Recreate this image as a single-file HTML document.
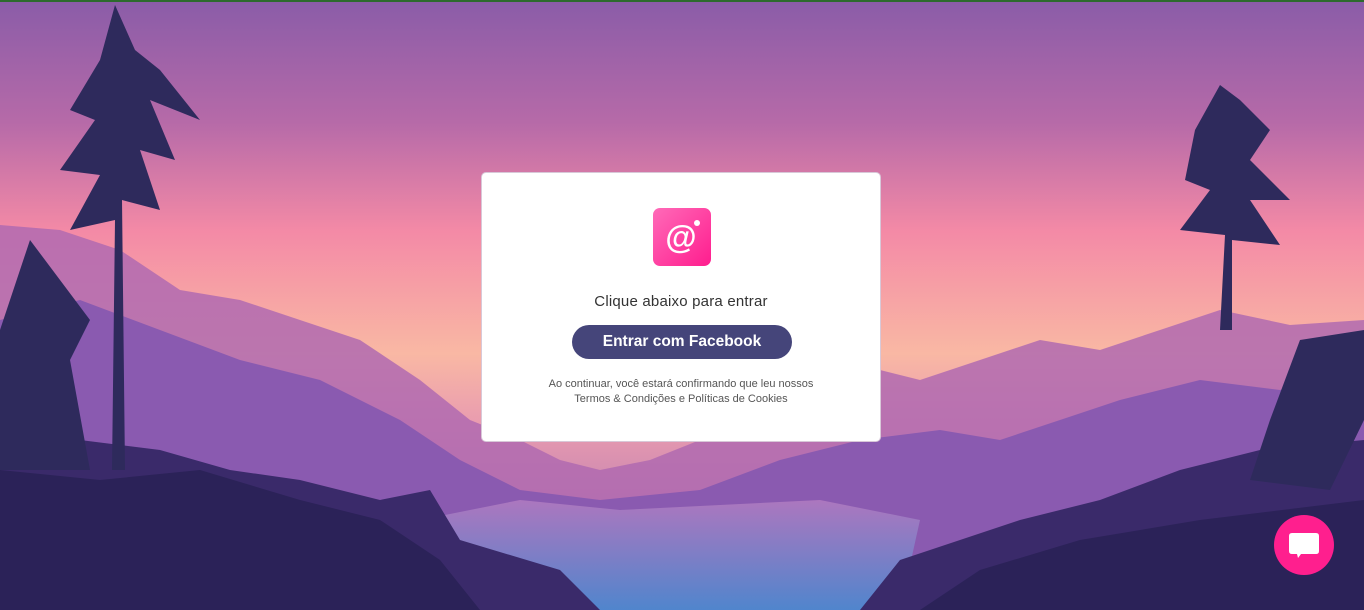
<!DOCTYPE html>
<html><head><meta charset="utf-8"><style>
html,body{margin:0;padding:0;width:1364px;height:610px;overflow:hidden;font-family:"Liberation Sans",sans-serif}
#bg{position:absolute;left:0;top:0;width:1364px;height:610px}
.card{position:absolute;left:481px;top:172px;width:398px;height:268px;background:#fff;border:1px solid #d8c8d8;border-radius:5px;text-align:center}
.logo{position:absolute;left:171px;top:35px;width:58px;height:58px;border-radius:7px;background:linear-gradient(135deg,#ff6ab8,#ff1d8e)}
.t1{position:absolute;top:120px;width:100%;font-size:15px;color:#333;letter-spacing:.2px}
.btn{position:absolute;left:90px;top:152px;width:220px;height:34px;border-radius:17px;background:#45457a;color:#fff;font-weight:bold;font-size:15.5px;line-height:34px}
.t2{position:absolute;top:204px;width:100%;font-size:11px;color:#555;line-height:15px}
.chat{position:absolute;left:1274px;top:515px;width:60px;height:60px;border-radius:50%;background:#ff1f8e}
.top{position:absolute;left:0;top:0;width:1364px;height:2px;background:#2d6a2d}
</style></head><body>
<svg id="bg" viewBox="0 0 1364 610" preserveAspectRatio="none">
<defs>
<linearGradient id="sky" x1="0" y1="0" x2="0" y2="1">
<stop offset="0" stop-color="#8a5ca8"/><stop offset=".2" stop-color="#b66aa8"/><stop offset=".38" stop-color="#f48aa6"/><stop offset=".58" stop-color="#f9b8a4"/><stop offset=".7" stop-color="#e89ab0"/><stop offset="1" stop-color="#9a6ab0"/></linearGradient>
<linearGradient id="val" x1="0" y1="0" x2="0" y2="1"><stop offset="0" stop-color="#b07ac0"/><stop offset="1" stop-color="#4a8ad0"/></linearGradient>
</defs>
<rect width="1364" height="610" fill="url(#sky)"/>
<path d="M0 225 L60 230 L120 250 L180 290 L240 300 L300 320 L360 340 L420 380 L470 420 L520 440 L560 460 L600 470 L650 460 L700 440 L760 420 L820 400 L880 370 L920 380 L980 360 L1040 340 L1100 350 L1160 330 L1220 310 L1290 325 L1364 320 L1364 610 L0 610Z" fill="#b06ab0" opacity=".85"/>
<path d="M0 320 L80 300 L160 330 L240 360 L320 380 L400 420 L460 460 L520 490 L600 500 L700 490 L780 460 L860 440 L940 430 L1000 440 L1060 420 L1120 400 L1200 380 L1280 390 L1364 370 L1364 610 L0 610Z" fill="#8a5ab0"/>
<path d="M420 520 L520 500 L620 510 L720 505 L820 500 L920 520 L900 610 L440 610Z" fill="url(#val)" opacity=".9"/>
<path d="M0 420 L80 440 L160 450 L230 470 L300 480 L380 500 L430 490 L460 540 L560 570 L600 610 L0 610Z" fill="#3a2a6a"/>
<path d="M860 610 L900 560 L960 540 L1020 520 L1100 500 L1180 470 L1260 450 L1364 440 L1364 610Z" fill="#3a2a6a"/>
<path d="M0 470 L100 480 L200 470 L300 500 L380 520 L440 560 L480 610 L0 610Z" fill="#2b2258"/>
<path d="M920 610 L980 570 L1080 540 L1200 520 L1364 500 L1364 610Z" fill="#2b2258"/>
<path d="M115 5 L100 60 L70 110 L95 120 L60 170 L100 175 L70 230 L115 220 L112 470 L125 470 L122 200 L160 210 L140 150 L175 160 L150 100 L200 120 L160 70 L135 50Z" fill="#2e2a5c"/>
<path d="M1220 85 L1195 130 L1185 180 L1210 190 L1180 230 L1225 235 L1220 330 L1232 330 L1232 240 L1280 245 L1250 200 L1290 200 L1250 160 L1270 130 L1240 100Z" fill="#2e2a5c"/>
<path d="M30 240 L0 330 L0 470 L90 470 L70 360 L90 320Z" fill="#2e2a5c"/>
<path d="M1300 340 L1270 420 L1250 480 L1330 490 L1364 420 L1364 330Z" fill="#2e2a5c"/>
</svg>
<div class="top"></div>
<div class="card">
<div class="logo"><svg width="58" height="58" viewBox="0 0 58 58"><circle cx="44" cy="15" r="3" fill="#fff"/><text x="28" y="40" font-family="Liberation Sans,sans-serif" font-weight="bold" font-size="32" fill="#fff" text-anchor="middle">@</text></svg></div>
<div class="t1">Clique abaixo para entrar</div>
<div class="btn">Entrar com Facebook</div>
<div class="t2">Ao continuar, você estará confirmando que leu nossos<br>Termos &amp; Condições e Políticas de Cookies</div>
</div>
<div class="chat"><svg width="60" height="60" viewBox="0 0 60 60"><path d="M18 18 H42 Q45 18 45 21 V36 Q45 39 42 39 H27 L24 43 L23 39 H18 Q15 39 15 36 V21 Q15 18 18 18Z" fill="#fff"/></svg></div>
</body></html>
